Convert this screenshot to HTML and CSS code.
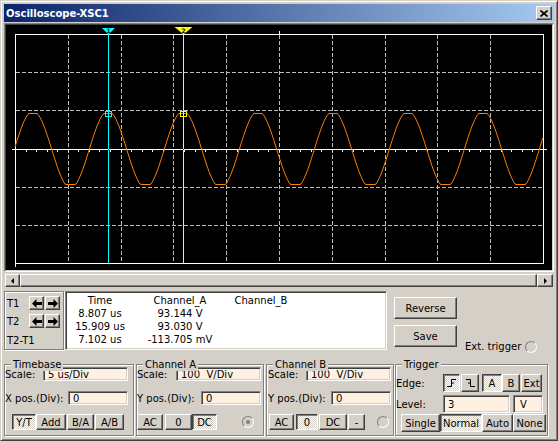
FILE: index.html
```html
<!DOCTYPE html>
<html lang="en">
<head>
    <meta charset="UTF-8">
    <title>Oscilloscope-XSC1</title>
    <link rel="stylesheet" href="styles.css">
</head>
<body>

<div class="window">
    <!-- Title bar -->
    <div class="titlebar">
        <span class="title">Oscilloscope-XSC1</span>
        <span class="btn close">
            <svg width="8" height="7" viewBox="0 0 8 7"><path d="M0.5 0.5L7.5 6.5M7.5 0.5L0.5 6.5" stroke="#000" stroke-width="1.6"/></svg>
        </span>
    </div>

    <!-- Scope screen -->
    <div class="screen">
        <svg width="546" height="245" viewBox="0 0 546 245">
            <g fill="none" stroke="#bdbdbd" stroke-dasharray="4 2">
                <path d="M62.5 10V238M115.5 10V238M167.5 10V238M220.5 10V238M273.5 10V238M326.5 10V238M379.5 10V238M431.5 10V238M484.5 10V238"/>
                <path d="M10 47.5H537M10 85.5H537M10 162.5H537M10 200.5H537"/>
            </g>
            <g fill="none" stroke="#fff">
                <path d="M9.5 9V242M9 9.5H538M537.5 9V239M9 238.5H538M273.5 6V9"/>
                <path d="M6 124.5H541"/>
                <path id="ticks" d=""/>
            </g>
            <polyline id="wave" fill="none" stroke="#ff8000" points=""/>
            <g fill="none">
                <path d="M102.5 9V238" stroke="#00ffff"/>
                <path d="M177.5 9V238" stroke="#ffff00"/>
                <rect x="99.5" y="86.5" width="6" height="5" stroke="#00ffff"/>
                <rect x="174.5" y="86.5" width="6" height="5" stroke="#ffff00"/>
            </g>
            <rect x="102" y="124" width="1" height="1" fill="#ff0000"/>
            <rect x="177" y="124" width="1" height="1" fill="#0000ff"/>
            <polygon points="96,3 109,3 102.5,9.5" fill="#00ffff"/>
            <text x="102.5" y="8" class="mark">1</text>
            <polygon points="168.5,2 186.5,2 177.5,9.5" fill="#ffff00"/>
            <text x="177.5" y="8" class="mark">2</text>
        </svg>
    </div>

    <!-- Horizontal scroll -->
    <div class="scrollbar">
        <span class="btn scroll-left"><svg width="3" height="6" viewBox="0 0 3 6"><path d="M3 0V6L0 3Z"/></svg></span>
        <span class="btn thumb"></span>
        <span class="btn scroll-right"><svg width="3" height="6" viewBox="0 0 3 6"><path d="M0 0V6L3 3Z"/></svg></span>
    </div>

    <!-- Cursor readout -->
    <div class="readout">
        <div class="cursors">
            <span>T1</span>
            <span class="arrows">
                <span class="btn arrow"><svg width="10" height="9" viewBox="0 0 10 9"><path d="M0 4.5L4.5 0V3H10V6H4.5V9Z"/></svg></span>
                <span class="btn arrow"><svg width="10" height="9" viewBox="0 0 10 9"><path d="M10 4.5L5.5 0V3H0V6H5.5V9Z"/></svg></span>
            </span>
            <span>T2</span>
            <span class="arrows">
                <span class="btn arrow"><svg width="10" height="9" viewBox="0 0 10 9"><path d="M0 4.5L4.5 0V3H10V6H4.5V9Z"/></svg></span>
                <span class="btn arrow"><svg width="10" height="9" viewBox="0 0 10 9"><path d="M10 4.5L5.5 0V3H0V6H5.5V9Z"/></svg></span>
            </span>
            <span class="diff">T2-T1</span>
        </div>

        <div class="values">
            <span>Time</span><span>Channel_A</span><span>Channel_B</span>
            <span>8.807 us</span><span>93.144 V</span><span></span>
            <span>15.909 us</span><span>93.030 V</span><span></span>
            <span>7.102 us</span><span>-113.705 mV</span><span></span>
        </div>

        <div class="actions">
            <div class="action-buttons">
                <span class="btn">Reverse</span>
                <span class="btn">Save</span>
            </div>
            <div class="ext">
                <span>Ext. trigger</span>
                <span class="radio"></span>
            </div>
        </div>
    </div>

    <!-- Control groups -->
    <div class="controls">
        <div class="group timebase">
            <span class="legend">Timebase</span>
            <div class="row"><span>Scale:</span><span class="field w85">5 us/Div</span></div>
            <div class="row"><span>X pos.(Div):</span><span class="field w60">0</span></div>
            <div class="keys tb-keys">
                <span class="btn on w24">Y/T</span>
                <span class="btn w30">Add</span>
                <span class="btn w27 gap1">B/A</span>
                <span class="btn w29 gap1">A/B</span>
            </div>
        </div>

        <div class="group channel chan-a">
            <span class="legend">Channel A</span>
            <div class="row"><span>Scale:</span><span class="field w85">100  V/Div</span></div>
            <div class="row"><span>Y pos.(Div):</span><span class="field w60">0</span></div>
            <div class="keys">
                <span class="btn w26">AC</span>
                <span class="btn w27 gap2">0</span>
                <span class="btn on w25">DC</span>
                <span class="radio dot"></span>
            </div>
        </div>

        <div class="group channel chan-b">
            <span class="legend">Channel B</span>
            <div class="row"><span>Scale:</span><span class="field w85">100  V/Div</span></div>
            <div class="row"><span>Y pos.(Div):</span><span class="field w60">0</span></div>
            <div class="keys">
                <span class="btn w25 gap1">AC</span>
                <span class="btn on w22 gap2">0</span>
                <span class="btn w28 gap1">DC</span>
                <span class="btn w17 gap1">-</span>
                <span class="radio"></span>
            </div>
        </div>

        <div class="group trigger">
            <span class="legend">Trigger</span>
            <div class="row">
                <span class="label-col">Edge:</span>
                <span class="btn on w17"><svg width="10" height="8" viewBox="0 0 10 8"><path d="M0 7.5H4.5V0.5H9M4.5 4H7" fill="none" stroke="#000"/></svg></span>
                <span class="btn w18 gap1"><svg width="10" height="8" viewBox="0 0 10 8"><path d="M1 0.5H5.5V7.5H10M3 4H5.5" fill="none" stroke="#000"/></svg></span>
                <span class="btn on w20 gap3">A</span>
                <span class="btn w18">B</span>
                <span class="btn w21 gap1">Ext</span>
            </div>
            <div class="row">
                <span class="label-col">Level:</span>
                <span class="field w67">3</span>
                <span class="field unit w30 gap3">V</span>
            </div>
            <div class="keys trig-keys">
                <span class="btn w39">Single</span>
                <span class="btn on w42">Normal</span>
                <span class="btn w31">Auto</span>
                <span class="btn w33">None</span>
            </div>
        </div>
    </div>
</div>

<script>
    // channel A trace and the small ruler ticks on the centre line
    const points = [];
    for (let x = 15; x <= 543; x++) {
        let v = 38.5 * Math.sin(2 * Math.PI * (x - 14.25) / 75);
        v = Math.max(-35, Math.min(36, v));
        points.push((x - 6) + "," + (124.5 - v).toFixed(1));
    }
    document.getElementById("wave").setAttribute("points", points.join(" "));

    let ticks = "";
    for (let i = 0; i <= 50; i++) {
        const x = Math.round(9 + i * 10.56) + 0.5;
        ticks += "M" + x + " 125V127";
    }
    document.getElementById("ticks").setAttribute("d", ticks);
</script>

</body>
</html>
```

FILE: styles.css
```css
* {
    box-sizing: border-box;
}

body {
    margin: 0;
    font-family: "DejaVu Sans", Verdana, sans-serif;
    font-size: 10px;
    line-height: 13px;
    color: #000;
    background: #d4d0c8;
}

/* Window frame */
.window {
    width: 558px;
    height: 441px;
    padding: 3px;
    border: 1px solid;
    border-color: #d4d0c8 #404040 #404040 #d4d0c8;
    box-shadow: inset 1px 1px #fff, inset -1px -1px #808080;
}

.titlebar {
    height: 18px;
    display: flex;
    align-items: center;
    justify-content: space-between;
    padding: 0 2px;
    background: linear-gradient(to right, #0a246a, #a6caf0);
}

.title {
    color: #fff;
    font-weight: bold;
}

/* Classic 3d button */
.btn {
    display: flex;
    align-items: center;
    justify-content: center;
    height: 100%;
    background: #d4d0c8;
    border: 1px solid;
    border-color: #fff #404040 #404040 #fff;
    box-shadow: inset -1px -1px #808080;
    white-space: nowrap;
}

.btn.on {
    border-color: #404040 #fff #fff #404040;
    box-shadow: inset 1px 1px #808080;
    background: repeating-conic-gradient(#fff 0 25%, #d4d0c8 0 50%) 0 0 / 2px 2px;
}

.close {
    width: 16px;
    height: 14px;
}

/* Screen */
.screen {
    margin-top: 1px;
    border: 1px solid;
    border-color: #808080 #fff #fff #808080;
}

.screen svg {
    display: block;
    box-sizing: content-box;
    border: 1px solid;
    border-color: #404040 #d4d0c8 #d4d0c8 #404040;
    background: #000;
}

.mark {
    font-size: 6px;
    font-weight: bold;
    text-anchor: middle;
    fill: #000;
}

.scrollbar {
    display: flex;
    height: 13px;
    margin: 2px 1px 0;
}

.scroll-left {
    width: 15px;
}

.scroll-right {
    width: 16px;
}

.thumb {
    flex: 1;
}

/* Readout row */
.readout {
    display: flex;
    height: 59px;
    margin-top: 4px;
}

.cursors {
    width: 60px;
    display: grid;
    grid-template-columns: 22px 31px;
    grid-template-rows: 14px 14px;
    row-gap: 4px;
    align-content: start;
    padding: 4px 0 0 2px;
    border: 1px solid #808080;
    box-shadow: inset 1px 1px #fff, 1px 1px #fff;
}

.cursors > span {
    display: flex;
    align-items: center;
}

.arrows {
    gap: 1px;
}

.arrow {
    width: 15px;
    height: 14px;
}

.cursors .diff {
    grid-column: 1 / -1;
    margin-top: 2px;
}

.values {
    width: 322px;
    margin-left: 1px;
    display: grid;
    grid-template-columns: 66px 94px 68px;
    grid-auto-rows: 13px;
    align-content: start;
    padding: 2px 0 0 1px;
    text-align: center;
    white-space: nowrap;
    background: #fff;
    border: 1px solid;
    border-color: #808080 #fff #fff #808080;
    box-shadow: inset 1px 1px #404040, inset -1px -1px #d4d0c8;
}

.actions {
    display: flex;
    margin-left: 7px;
}

.action-buttons {
    width: 63px;
    display: flex;
    flex-direction: column;
    gap: 6px;
    padding-top: 6px;
}

.action-buttons .btn {
    height: 22px;
}

.ext {
    width: 72px;
    height: 13px;
    margin-left: 8px;
    margin-bottom: -3px;
    align-self: flex-end;
    display: flex;
    align-items: center;
    justify-content: space-between;
}

.radio {
    width: 12px;
    height: 12px;
    border-radius: 50%;
    border: 1px solid;
    border-color: #808080 #fff #fff #808080;
    background: #d4d0c8;
    display: flex;
    align-items: center;
    justify-content: center;
}

.radio.dot::after {
    content: "";
    width: 4px;
    height: 4px;
    border-radius: 50%;
    background: #808080;
}

/* Control groups */
.controls {
    display: flex;
    height: 72px;
    margin-top: 14px;
}

.group {
    position: relative;
    height: 72px;
    border: 1px solid #808080;
    box-shadow: inset 1px 1px #fff, 1px 1px #fff;
    padding-top: 2px;
}

.legend {
    position: absolute;
    top: -7px;
    left: 6px;
    padding: 0 2px;
    background: #d4d0c8;
}

.timebase {
    width: 130px;
    padding-right: 5px;
}

.channel {
    width: 128px;
    margin-left: 2px;
    padding-right: 2px;
}

.chan-b {
    padding-left: 1px;
}

.trigger {
    width: 153px;
    margin-left: 1px;
    padding-top: 9px;
}

.row {
    display: flex;
    align-items: center;
    height: 14px;
}

.row + .row {
    margin-top: 10px;
}

.row .field {
    margin-left: auto;
}

.field {
    height: 100%;
    display: flex;
    align-items: center;
    padding-left: 4px;
    white-space: pre;
    background: #fff1e2;
    border: 1px solid;
    border-color: #808080 #fff #fff #808080;
    box-shadow: inset 1px 1px #404040, inset -1px -1px #d4d0c8;
}

.keys {
    display: flex;
    align-items: center;
    height: 16px;
    margin-top: 9px;
}

.tb-keys {
    margin-left: 7px;
}

.chan-a .radio {
    margin-left: auto;
    margin-right: 7px;
}

.chan-b .radio {
    margin-left: auto;
    margin-right: 2px;
}

.trigger .row {
    height: 18px;
}

.trigger .row + .row {
    margin-top: 3px;
}

.trigger .row .field {
    margin-left: 0;
}

.trigger .row .unit {
    margin-left: 3px;
    padding-left: 6px;
}

.label-col {
    width: 47px;
}

.trig-keys {
    height: 18px;
    margin-top: 1px;
    margin-left: 5px;
}

/* Fixed widths used by the little buttons and fields */
.w17 { width: 17px; }
.w18 { width: 18px; }
.w20 { width: 20px; }
.w21 { width: 21px; }
.w22 { width: 22px; }
.w24 { width: 24px; }
.w25 { width: 25px; }
.w26 { width: 26px; }
.w27 { width: 27px; }
.w28 { width: 28px; }
.w29 { width: 29px; }
.w30 { width: 30px; }
.w31 { width: 31px; }
.w33 { width: 33px; }
.w39 { width: 39px; }
.w42 { width: 42px; }
.w60 { width: 60px; }
.w67 { width: 67px; }
.w85 { width: 85px; }

.gap1 { margin-left: 1px; }
.gap2 { margin-left: 2px; }
.gap3 { margin-left: 3px; }
```
